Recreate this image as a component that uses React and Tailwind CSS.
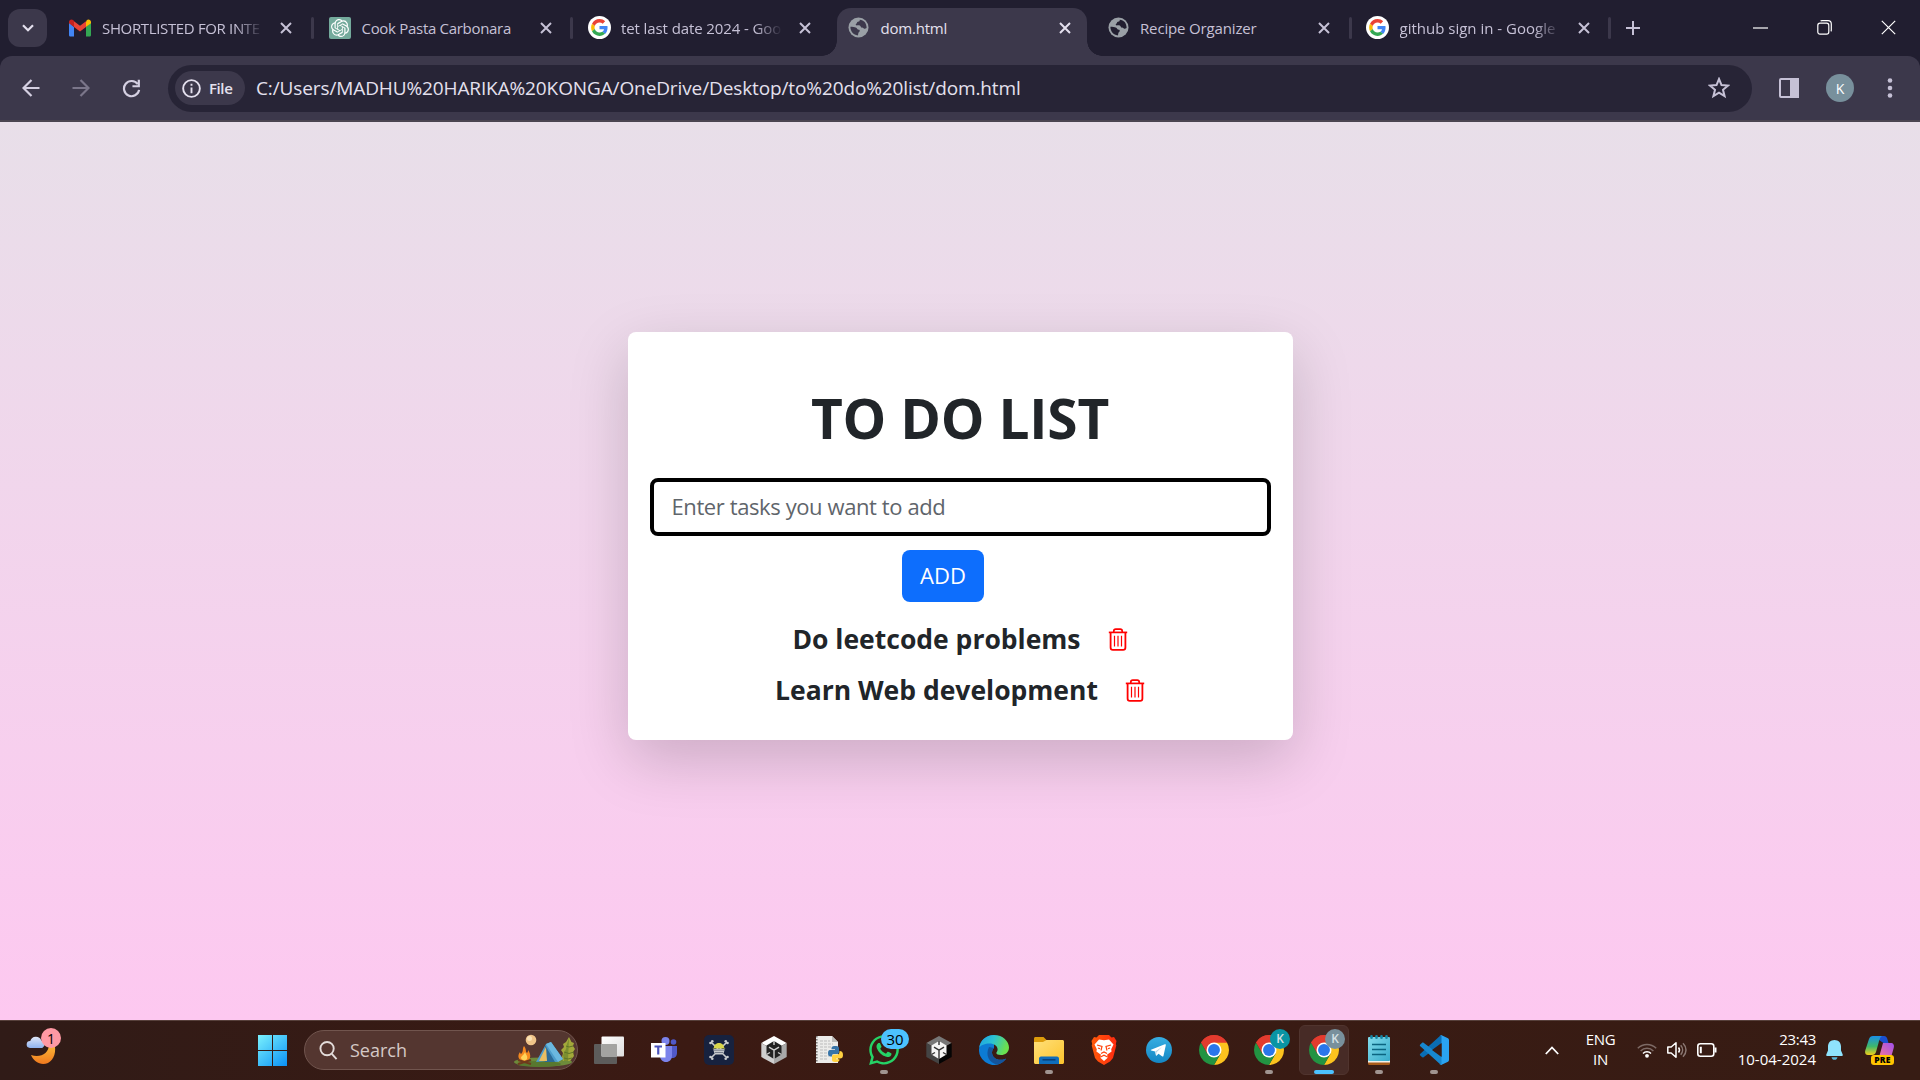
import { FaWhatsapp } from "react-icons/fa";
import { SiOpenai } from "react-icons/si";

/* ---------- favicons ---------- */
function Gmail() {
  return (
    <svg viewBox="0 0 22 17" className="h-[18px] w-[22px]">
      <path d="M0 3v12.4C0 16.3.7 17 1.6 17H5V7.5z" fill="#4285f4" />
      <path d="M22 3v12.4c0 .9-.7 1.6-1.6 1.6H17V7.5z" fill="#34a853" />
      <path d="M17 2.2v5.4l5-3.8V2.6C22 .3 19.4-.6 17.9.6z" fill="#fbbc04" />
      <path d="M5 7.6V1.8l6 4.5 6-4.5v5.8l-6 4.5z" fill="#ea4335" />
      <path d="M0 2.6v1.2l5 3.8V1.6L4.1.6C2.400-.6 0 .3 0 2.600z" fill="#c5221f" />
    </svg>
  );
}

function ChatGPT() {
  return (
    <div className="flex size-[22px] items-center justify-center rounded-[2px] bg-[#74aa9c] text-white">
      <SiOpenai className="size-[18px]" />
    </div>
  );
}

function GoogleG() {
  return (
    <svg viewBox="0 0 48 48" className="size-[23px] shrink-0">
      <circle cx="24" cy="24" r="24" fill="#fff" />
      <g transform="translate(6.500 6.500) scale(.73)">
        <path fill="#ea4335" d="M24 9.500c3.540 0 6.710 1.220 9.210 3.600l6.850-6.850C35.900 2.380 30.470 0 24 0 14.620 0 6.510 5.380 2.560 13.220l7.980 6.190C12.430 13.720 17.740 9.500 24 9.500z" />
        <path fill="#4285f4" d="M46.980 24.550c0-1.570-.15-3.090-.38-4.550H24v9.020h12.940c-.58 2.960-2.260 5.480-4.780 7.180l7.730 6c4.510-4.180 7.090-10.360 7.090-17.650z" />
        <path fill="#fbbc05" d="M10.530 28.590c-.48-1.450-.76-2.990-.76-4.590s.27-3.140.76-4.590l-7.980-6.190C.92 16.460 0 20.120 0 24c0 3.880.92 7.540 2.560 10.780l7.970-6.190z" />
        <path fill="#34a853" d="M24 48c6.480 0 11.930-2.130 15.890-5.810l-7.730-6c-2.150 1.450-4.920 2.300-8.160 2.300-6.260 0-11.570-4.220-13.470-9.910l-7.980 6.190C6.510 42.620 14.620 48 24 48z" />
      </g>
    </svg>
  );
}

function Globe({ cut }) {
  return (
    <svg viewBox="0 0 22 22" className="size-[21px]">
      <circle cx="11" cy="11" r="10.500" fill="#9aa0a6" />
      <path
        d="M2.500 10.200c2.200.2 4.200.1 6.200 1 .9.500.8 1.500 1.800 2 1 .4 1.700 0 1.800 1.300.1 1.200-1.400 1.400-1.500 2.500 0 1-.2 1.700-.6 2.300C5.800 18.700 2.500 15.200 2.500 10.200zM12.300 3c.2 1.300-.5 2-1.900 2.100-1.300.1-.5 1.600-1.800 2.100-1 .5-.5 1.700.6 1.600 1.800-.2 3.700-.2 4.200 1.400.4 1.300 2.200.7 2.900 1.500.8 1 1.700.8 3.200-.2C19.600 6.600 16.500 3.200 12.300 3z"
        fill={cut}
      />
    </svg>
  );
}

function Cross({ className }) {
  return (
    <svg viewBox="0 0 12 12" className={className} fill="none" stroke="currentColor" strokeWidth="2">
      <path d="M1 1l10 10M11 1L1 11" />
    </svg>
  );
}

/* ---------- browser tabs ---------- */
const tabs = [
  { icon: <Gmail />, title: "SHORTLISTED FOR INTE", fade: true, track: "tracking-[-0.35px]", sep: true },
  { icon: <ChatGPT />, title: "Cook Pasta Carbonara", track: "tracking-[-0.3px]", sep: true },
  { icon: <GoogleG />, title: "tet last date 2024 - Goo", fade: true, track: "tracking-[-0.1px]" },
  { icon: <Globe cut="#3c384b" />, title: "dom.html", active: true, track: "tracking-[-0.2px]" },
  { icon: <Globe cut="#211e30" />, title: "Recipe Organizer", track: "tracking-[-0.15px]", sep: true },
  { icon: <GoogleG />, title: "github sign in - Google", fade: true, track: "tracking-[0px]", sep: true },
];

function Tab({ tab }) {
  return (
    <div className="relative h-12 w-[259.500px] shrink-0 pl-[5px] pr-[4px]">
      {tab.active && (
        <>
          <div className="absolute -left-[10px] bottom-0 size-[15px] bg-[radial-gradient(circle_at_0_0,transparent_14.500px,#3c384b_15px)]" />
          <div className="absolute -right-[11px] bottom-0 size-[15px] bg-[radial-gradient(circle_at_100%_0,transparent_14.500px,#3c384b_15px)]" />
        </>
      )}
      <div
        className={
          "flex h-12 items-center rounded-t-[14px] pb-[9px] pl-[11px] " +
          (tab.active ? "bg-[#3c384b] text-[#e4e0ee]" : "text-[#c6c1d6]")
        }
      >
        <div className="flex w-[22px] shrink-0 justify-center">{tab.icon}</div>
        <div
          className={
            "ml-[11px] w-[163px] whitespace-nowrap text-[15px] leading-6 " +
            tab.track +
            (tab.fade ? " [mask-image:linear-gradient(to_right,#000_82%,transparent_99%)]" : "")
          }
        >
          {tab.title}
        </div>
        <Cross className="ml-[15px] size-[12px] shrink-0" />
      </div>
      {tab.sep && <div className="absolute -right-[1px] top-[9px] h-[22px] w-[3px] rounded bg-[#3c384b]" />}
    </div>
  );
}

function TabStrip() {
  return (
    <div className="flex h-14 bg-[#211e30] pt-2">
      <div className="ml-2 mt-px flex h-[38px] w-[39px] items-center justify-center rounded-[12px] bg-[#3c384b] text-[#e4e0ee]">
        <svg viewBox="0 0 12 8" className="h-[8px] w-[12px]" fill="none" stroke="currentColor" strokeWidth="2.200">
          <path d="M1 1.200l5 5 5-5" />
        </svg>
      </div>
      <div className="ml-[6px] flex">
        {tabs.map((t) => (
          <Tab key={t.title} tab={t} />
        ))}
      </div>
      <svg viewBox="0 0 14 14" className="ml-[16px] mt-[13px] size-[14px] text-[#c6c1d6]" stroke="currentColor" strokeWidth="2">
        <path d="M7 0v14M0 7h14" />
      </svg>
      <div className="ml-auto mr-[24px] mt-[12px] flex items-start gap-[49px] text-white">
        <svg viewBox="0 0 15 15" className="size-[15px]" stroke="currentColor" strokeWidth="1.200">
          <path d="M0 8h15" />
        </svg>
        <svg viewBox="0 0 15 15" className="size-[15px]" fill="none" stroke="currentColor" strokeWidth="1.200">
          <rect x=".8" y="3.200" width="11" height="11" rx="2.200" />
          <path d="M3.600 1.200C4 .8 4.500.7 5 .7h6c2 0 3.300 1.300 3.300 3.300v6c0 .6-.1 1-.4 1.400" />
        </svg>
        <svg viewBox="0 0 15 15" className="size-[15px]" stroke="currentColor" strokeWidth="1.200">
          <path d="M.8.8l13.400 13.400M14.200.8L.8 14.200" />
        </svg>
      </div>
    </div>
  );
}

function Toolbar() {
  return (
    <div className="bg-[#211e30]">
      <div className="flex h-[66px] items-center rounded-t-[12px] border-b-2 border-[#4a4550] bg-[#3c384b] text-[#c6c1d6]">
        <svg viewBox="0 0 18 18" className="ml-[22px] size-[18px]" fill="none" stroke="#d5d0e2" strokeWidth="2.200">
          <path d="M17.500 9H2M9.500 1L1.500 9l8 8" />
        </svg>
        <svg viewBox="0 0 18 18" className="ml-[32px] size-[18px]" fill="none" stroke="#7b768a" strokeWidth="2.200">
          <path d="M.5 9H16M8.500 1l8 8-8 8" />
        </svg>
        <svg viewBox="0 0 20 20" className="ml-[32px] size-[19px]" fill="none" stroke="#d5d0e2" strokeWidth="2.300">
          <path d="M16.600 5.400A8 8 0 1 0 18 11.500" />
          <path d="M17.700.8v6.800H11" />
        </svg>
        <div className="ml-[27px] flex h-[47px] w-[1584px] items-center rounded-full bg-[#272436] pl-[7px] pr-[22px]">
          <div className="flex h-[34px] w-[70px] items-center rounded-full bg-[#3c384b] pl-[7px] text-[#e4e0ee]">
            <svg viewBox="0 0 20 20" className="size-[19px]" fill="none" stroke="currentColor" strokeWidth="2">
              <circle cx="10" cy="10" r="8.800" />
              <path d="M10 9v6M10 5v2.200" />
            </svg>
            <span className="ml-[8px] text-[15px] font-semibold tracking-[-0.4px]">File</span>
          </div>
          <span className="ml-[11px] whitespace-nowrap text-[19px] tracking-[-0.115px] text-[#e4e0ee]">
            C:/Users/MADHU%20HARIKA%20KONGA/OneDrive/Desktop/to%20do%20list/dom.html
          </span>
          <svg viewBox="0 0 22 22" className="ml-auto size-[22px]" fill="none" stroke="currentColor" strokeWidth="2">
            <path d="M11 2l2.500 6.100 6.600.5-5.100 4.200 1.600 6.400L11 15.700l-5.600 3.500L7 12.800 1.900 8.600l6.600-.5z" />
          </svg>
        </div>
        <svg viewBox="0 0 20 20" className="ml-[27px] size-[20px]" fill="none" stroke="currentColor" strokeWidth="2">
          <rect x="1" y="1" width="18" height="18" rx="1" />
          <path d="M12 1h7v18h-7z" fill="currentColor" />
        </svg>
        <div className="ml-[27px] flex size-[28px] items-center justify-center rounded-full bg-[#78909c] text-[14px] text-white">K</div>
        <svg viewBox="0 0 6 20" className="ml-[33px] h-[20px] w-[6px]" fill="currentColor">
          <circle cx="3" cy="2.500" r="2.300" />
          <circle cx="3" cy="10" r="2.300" />
          <circle cx="3" cy="17.500" r="2.300" />
        </svg>
      </div>
    </div>
  );
}

/* ---------- page ---------- */
function Trash() {
  return (
    <svg viewBox="0 0 20 23" className="ml-[27px] mt-[2px] h-[23px] w-[20px]" fill="none" stroke="#ff0000">
      <path d="M.8 4.400h18.400" strokeWidth="1.700" />
      <path d="M5.800 4V3.200C5.800 2 6.600 1.200 7.800 1.200h4.400c1.200 0 2 .8 2 2V4" strokeWidth="1.700" />
      <path d="M2.600 4.500v15c0 1.500.8 2.400 2.300 2.400h10.200c1.500 0 2.300-.9 2.300-2.400v-15" strokeWidth="1.800" />
      <path d="M6.500 7.800v10.600M10 7.800v10.600M13.500 7.800v10.600" strokeWidth="1.200" />
    </svg>
  );
}

function Task({ text }) {
  return (
    <div className="flex h-[51px] items-center justify-center">
      <span className="text-[26.500px] font-bold leading-8">{text}</span>
      <Trash />
    </div>
  );
}

function Page() {
  return (
    <div className="flex h-[898px] items-start justify-center bg-gradient-to-b from-[#e8dfe9] to-[#fdc8f0] pt-[210px]">
      <div className="h-[408px] w-[665px] rounded-lg bg-white px-[22px] pt-[51px] text-center text-[#212529] shadow-[0_20px_60px_rgba(0,0,0,0.175)]">
        <h1 className="text-[55px] font-bold leading-[70px] tracking-[-0.200px]">TO DO LIST</h1>
        <input
          type="text"
          placeholder="Enter tasks you want to add"
          className="mt-[25px] block h-[58px] w-full rounded-lg border-4 border-black pb-[2px] pl-[18px] pr-[16px] text-[22px] tracking-[-0.4px] outline-none placeholder:text-[#5f656b] placeholder:opacity-100"
        />
        <button className="mr-[35px] mt-[14px] h-[52px] w-[82px] rounded-lg bg-[#0d6efd] pb-[2px] pl-px text-[22px] leading-7 text-white">ADD</button>
        <div className="mt-[11px]">
          <Task text="Do leetcode problems" />
          <Task text="Learn Web development" />
        </div>
      </div>
    </div>
  );
}

/* ---------- taskbar icons ---------- */
function Weather() {
  return (
    <div className="relative h-[40px] w-[36px]">
      <svg viewBox="0 0 36 40" className="h-[40px] w-[36px]">
        <defs>
          <linearGradient id="moon" x1="0" y1="0" x2="0" y2="1">
            <stop offset="0" stopColor="#fcbf3a" />
            <stop offset="1" stopColor="#f0791f" />
          </linearGradient>
          <linearGradient id="cloud" x1="0" y1="0" x2="0" y2="1">
            <stop offset="0" stopColor="#dfe6f7" />
            <stop offset="1" stopColor="#8fb2ee" />
          </linearGradient>
        </defs>
        <path d="M29 15c3 8 0 17-6 20-7 3-14-1-17-8 9 3 18-1 18-11z" fill="url(#moon)" />
        <path d="M5 20a3.500 3.500 0 0 1 .3-7 5.800 5.800 0 0 1 11-.5 4 4 0 0 1 1 7.500z" fill="url(#cloud)" />
      </svg>
      <div className="absolute left-[16px] top-0 flex size-[20px] items-center justify-center rounded-full bg-[#ff99a4] text-[14px] text-black">1</div>
    </div>
  );
}

function WindowsLogo() {
  return (
    <svg viewBox="0 0 29 32" className="h-[32px] w-[29px]">
      <defs>
        <linearGradient id="win" gradientUnits="userSpaceOnUse" x1="0" y1="0" x2="29" y2="32">
          <stop offset="0" stopColor="#7df3fd" />
          <stop offset="1" stopColor="#0a91f6" />
        </linearGradient>
      </defs>
      <path d="M0 1h14v15H0zM15 1h14v15H15zM0 17h14v15H0zM15 17h14v15H15z" fill="url(#win)" />
    </svg>
  );
}

function Campsite() {
  return (
    <svg viewBox="0 0 62 34" className="h-[34px] w-[62px]">
      <ellipse cx="30" cy="29" rx="29" ry="4.500" fill="#6d8a3a" />
      <ellipse cx="26" cy="31" rx="22" ry="3" fill="#58782f" />
      <circle cx="18" cy="7" r="5.300" fill="#efc489" />
      <circle cx="16.500" cy="5.500" r="2.500" fill="#fae2b6" />
      <path d="M56 4l2.500 5 2.500 1-1 3 2 3-2 3 1 4-4 5h-7l-1-4 1-4-2-3 3-3-1-3 3-2z" fill="#a3a83a" />
      <path d="M56 5l-1 23h-4l-1-6 3-6 1-5z" fill="#7c8f2f" />
      <path d="M53 13l3 1 4-1M51 19l5 1.500 5-1.500M51 25l4 1 4-1" fill="none" stroke="#5f7526" strokeWidth="1" />
      <path d="M23 29l10-18 5-2 12 17-6 3-10-1z" fill="#4c9ccb" />
      <path d="M33 11l5-2 12 17-5 3z" fill="#6bb8df" />
      <path d="M32 12l10 17H32z" fill="#2b6a96" />
      <path d="M33 14l-7 14h8z" fill="#e8bd62" />
      <path d="M11 13c3 4 1 5 3 7 1-1 1-2 1-3 3 4 4 10-3 11-7 0-8-5-5-9 0 1 1 2 1 2 3-3 1-5 3-8z" fill="#f58a1f" />
      <path d="M12 19c1 3 3 4 2 7-1 2-5 2-6-1 0-2 3-3 4-6z" fill="#ffd45a" />
      <path d="M5 27l13 4M18 27L5 31" stroke="#70391c" strokeWidth="2" />
    </svg>
  );
}

function TaskView() {
  return (
    <svg viewBox="0 0 30 30" className="size-[30px]">
      <defs>
        <linearGradient id="tv" x1="0" y1="0" x2="1" y2="1">
          <stop offset="0" stopColor="#fff" />
          <stop offset="1" stopColor="#ddd" />
        </linearGradient>
      </defs>
      <rect x="0" y="9" width="23" height="20" rx="1" fill="#5d5c5b" />
      <rect x="7.500" y="1.500" width="22.500" height="20" rx="1" fill="url(#tv)" />
      <path d="M7.500 9H22c.6 0 1 .4 1 1v11.500H7.500z" fill="#a3a3a1" />
    </svg>
  );
}

function Teams() {
  return (
    <svg viewBox="0 0 28 28" className="size-[28px]">
      <circle cx="23.500" cy="6" r="2.800" fill="#5059c9" />
      <path d="M19 10h8v7c0 3-2 5-4.500 5H19z" fill="#5059c9" />
      <circle cx="15.500" cy="5" r="4" fill="#7b83eb" />
      <path d="M10 10h12v9.500c0 4-2.500 6.500-6 6.500s-6-2.500-6-6.500z" fill="#7b83eb" />
      <rect x="1" y="7" width="14.500" height="14.500" fill="#fff" />
      <path d="M4.500 10.500H12M8.250 10.500v8" stroke="#4b53bc" strokeWidth="2.200" />
    </svg>
  );
}

function Pirate() {
  return (
    <svg viewBox="0 0 30 30" className="size-[30px]">
      <rect width="30" height="30" rx="5" fill="#17223f" />
      <path d="M7 7l16 16M23 7L7 23" stroke="#c9cbcd" strokeWidth="1.600" />
      <g fill="#c9cbcd">
        <circle cx="6.500" cy="8" r="1.300" /><circle cx="8.300" cy="6.200" r="1.300" />
        <circle cx="23.500" cy="8" r="1.300" /><circle cx="21.700" cy="6.200" r="1.300" />
        <circle cx="6.500" cy="22" r="1.300" /><circle cx="8.300" cy="23.800" r="1.300" />
        <circle cx="23.500" cy="22" r="1.300" /><circle cx="21.700" cy="23.800" r="1.300" />
        <path d="M9.500 14h11c0 3-1 4.500-2.500 5.500H12c-1.500-1-2.500-2.500-2.500-5.500z" />
      </g>
      <path d="M10 12.500c0-6 10-6 10 0l1.500 1h-13z" fill="#d9d64b" />
      <path d="M10 15.200h10M11 17.500h8" stroke="#6d7482" strokeWidth=".9" />
    </svg>
  );
}

function Unity({ dark }) {
  return (
    <svg viewBox="0 0 26 28" className="h-[28px] w-[26px]">
      <path d="M13 0l12.700 7L13 14 .3 7z" fill={dark ? "#777" : "#fff"} />
      <path d="M.3 7L13 14v14L.3 21z" fill={dark ? "#444" : "#cfcfcf"} />
      <path d="M25.700 7L13 14v14l12.700-7z" fill={dark ? "#050505" : "#a9a9a9"} />
      <path d="M13 5l7.500 4.500v9L13 23l-7.500-4.500v-9z" fill={dark ? "#f4f4f4" : "#222"} />
      <path
        d="M13 14.200V23M13 14.200L8 11.200M13 14.200l5-3M13 5v4M5.500 18.500l3.500-2M20.500 18.500l-3.500-2"
        stroke={dark ? "#333" : "#cfcfcf"}
        strokeWidth="1.400"
      />
    </svg>
  );
}

function PythonFile() {
  return (
    <svg viewBox="0 0 30 30" className="size-[30px]">
      <path d="M2 1h16l6 6v21H2z" fill="#ececea" />
      <path d="M18 1l6 6h-6z" fill="#bdbdbb" />
      <path d="M2.800 1v27" stroke="#777" strokeWidth="1.500" strokeDasharray="1.500 1.500" />
      <path d="M6 6h10M6 9h13M6 12h11M6 15h8M6 18h8M6 21h9M6 24h8" stroke="#bbb" strokeDasharray="3 1" />
      <path d="M21 11c4 0 4 1 4 3v3c0 1.500-1 2-2.500 2H20c-2 0-2 1-2 2.500h-1.500c-2 0-2.500-1.500-2.500-3.500 0-2.500 1-3 3-3h4v-.8h-3.500C17.500 12 18 11 21 11z" fill="#3774a8" />
      <path d="M22 27c-4 0-4-1-4-3v-2.500c0-1.500 1-2 2.500-2H23c2 0 2.500-1 2.500-3.500 2.500 0 3.500 1.500 3.500 4s-1 3.500-3 3.500h-4v.8h3.500C25.500 26 25 27 22 27z" fill="#ffd141" />
    </svg>
  );
}

function WhatsApp() {
  return <FaWhatsapp className="size-[34px] shrink-0 text-[#25d366]" />;
}

function Edge() {
  return (
    <svg viewBox="0 0 30 30" className="size-[30px]">
      <defs>
        <linearGradient id="eg" x1="0" y1="0" x2="1" y2=".3">
          <stop offset="0" stopColor="#1d9fe4" />
          <stop offset=".5" stopColor="#2cc3d2" />
          <stop offset="1" stopColor="#6be04f" />
        </linearGradient>
      </defs>
      <path d="M15 0a15 15 0 1 0 11.500 24.600c.4-.5 0-1-.6-.7-6 2.600-12.900-.4-12.900-6.400 0-3 2-4.500 2-4.500z" fill="#0c7bd4" />
      <path d="M10 12c-4 8 0 16 8.500 17.500 3-.6 6-2.300 8-4.900.4-.5 0-1-.6-.7-6 2.600-12.900-.4-12.900-6.400 0-3 2-4.500 2-4.500z" fill="#14549c" />
      <path d="M.2 13C1 5.500 7 0 15 0c9 0 15 6.500 15 12.500 0 5-4 7.500-8 7.500-3 0-4.700-1-4.700-2 0-.8 1.300-1.300 1.300-3.500 0-3.500-3.500-6-8-6C6 8.500 1.500 10 .2 13z" fill="url(#eg)" />
    </svg>
  );
}

function Folder() {
  return (
    <svg viewBox="0 0 30 30" className="size-[30px]">
      <defs>
        <linearGradient id="fo" x1="0" y1="0" x2="1" y2="1">
          <stop offset="0" stopColor="#ffe07a" />
          <stop offset="1" stopColor="#fcc32c" />
        </linearGradient>
      </defs>
      <path d="M0 3.500C0 2.700.6 2 1.500 2h8l3.500 3.500V9H0z" fill="#dd9c0b" />
      <path d="M0 7h9l3.500-2H28.500c.8 0 1.500.7 1.500 1.500V27.500c0 .8-.7 1.500-1.500 1.500h-27C.7 29 0 28.300 0 27.500z" fill="url(#fo)" />
      <path d="M5 29v-5.500c0-1 .8-2 2-2h16c1.200 0 2 1 2 2V29z" fill="#0f6dbb" />
      <path d="M8.500 24.800h13" stroke="#093f78" strokeWidth="1.500" />
    </svg>
  );
}

function Brave() {
  return (
    <svg viewBox="0 0 26 30" className="h-[30px] w-[26px]">
      <defs>
        <linearGradient id="br" x1="0" y1="0" x2="1" y2="0">
          <stop offset="0" stopColor="#ff5a0a" />
          <stop offset="1" stopColor="#ff2a10" />
        </linearGradient>
      </defs>
      <path d="M8 0h10l2.500 2.500L23 2l2.500 4-.7 3 .5 1.500L22 23l-3 3.500L13 30l-6-3.500L4 23 .7 10.500 1.200 9 .5 6 3 2l2.500.5z" fill="url(#br)" />
      <path d="M8 4.500l5 .7 5-.7 4.500 5-2.300 4.800.4 2.200-4.600 3.200 1 2.800-4 3.500-4-3.500 1-2.800-4.600-3.200.4-2.200L3.500 9.500z" fill="#fff" />
      <path d="M6 10l5 1.500-1 4M20 10l-5 1.500 1 4M10 18.500l3-1.500 3 1.500M9 22.200l4-2 4 2M7 13l2 .8M19 13l-2 .8" fill="none" stroke="#ff440c" strokeWidth="1.200" />
    </svg>
  );
}

function Telegram() {
  return (
    <svg viewBox="0 0 26 26" className="size-[26px]">
      <defs>
        <linearGradient id="tg" x1="0" y1="0" x2="0" y2="1">
          <stop offset="0" stopColor="#37aee2" />
          <stop offset="1" stopColor="#1486c4" />
        </linearGradient>
      </defs>
      <circle cx="13" cy="13" r="13" fill="url(#tg)" />
      <path d="M5 12.800l13.800-5.500c.8-.2 1.200.2 1 1l-2.300 10.400c-.2.900-.8 1-1.500.6l-3.500-2.600-1.800 1.700c-.5.400-.8.300-.9-.3l-.7-3.600-3.900-1.100c-.6-.2-.6-.4-.2-.6z" fill="#fff" />
      <path d="M9.300 14.500l6.600-4.400-5.300 5.200-.4 2.700z" fill="#b8d4e6" />
    </svg>
  );
}

function Chrome() {
  return (
    <svg viewBox="0 0 48 48" className="size-[30px]">
      <path d="M24 24L3.220 12A24 24 0 0 1 44.780 12z" fill="#e33b2e" />
      <path d="M24 12h20.780A24 24 0 0 1 24 48l10.390-18z" fill="#fcc31e" />
      <path d="M13.600 30L3.220 12A24 24 0 0 0 24 48l10.390-18z" fill="#229342" />
      <path d="M3.220 12A24 24 0 0 1 44.780 12H24L13.610 30z" fill="#e33b2e" />
      <circle cx="24" cy="24" r="12" fill="#fff" />
      <circle cx="24" cy="24" r="9.500" fill="#2a76ea" />
    </svg>
  );
}

function Notepad() {
  return (
    <svg viewBox="0 0 22 30" className="h-[30px] w-[22px]">
      <defs>
        <linearGradient id="np" x1="0" y1="0" x2="1" y2="1">
          <stop offset="0" stopColor="#83dcec" />
          <stop offset="1" stopColor="#37abcb" />
        </linearGradient>
      </defs>
      <path d="M0 25h22v3.800c0 .7-.5 1.200-1.200 1.200H1.200C.5 30 0 29.500 0 28.800z" fill="#a85b1a" />
      <path d="M0 24h22v3.500H0z" fill="#f4efe8" />
      <rect y="2" width="22" height="24" rx="1" fill="url(#np)" />
      <path d="M4 9.500h14M4 14.500h14M4 19.500h14" stroke="#0b6480" strokeWidth="1.700" />
      <path d="M3.500 1.300v1.500M8.500 1.300v1.500M13.500 1.300v1.500M18.500 1.300v1.500" stroke="#1686a4" strokeWidth="2.600" strokeLinecap="round" />
    </svg>
  );
}

function VSCode() {
  return (
    <svg viewBox="0 0 30 30" className="size-[30px]">
      <path d="M22 0L1.300 18.800c-.6.500-.6 1.300 0 1.800l1.600 1.500c.5.400 1.100.5 1.700.1L28 4.500z" fill="#0a6db4" />
      <path d="M22 30L1.300 11.200c-.6-.5-.6-1.300 0-1.800l1.600-1.500c.5-.4 1.100-.5 1.700-.1L28 25.500z" fill="#1787cf" />
      <path d="M22 0l7 3.300c.6.300 1 .9 1 1.600v20.200c0 .7-.4 1.300-1 1.600L22 30c-.7.200-1.300 0-1.300-.6 1 .7 1.800.2 1.800-.8V1.400c0-1-1-1.500-1.800-.8C21-.1 21.500-.2 22 0z" fill="#2aa3f2" />
      <path d="M22.500 8v14L13 15z" fill="#3a1b14" />
    </svg>
  );
}

function ProfileBadge({ teal }) {
  return (
    <div
      className={
        "absolute -right-[6px] -top-[6px] flex size-[20px] items-center justify-center rounded-full text-[12px] font-semibold text-[#d6e0e4] " +
        (teal ? "bg-[#0a94a4]" : "bg-[#78909c]")
      }
    >
      K
    </div>
  );
}

const apps = [
  { id: "view", el: <TaskView /> },
  { id: "teams", el: <Teams /> },
  { id: "pirate", el: <Pirate /> },
  { id: "unityhub", el: <Unity /> },
  { id: "python", el: <PythonFile /> },
  {
    id: "whatsapp",
    el: <WhatsApp />,
    run: true,
    badge: <div className="absolute -right-[10px] -top-[6px] flex h-[20px] w-[28px] items-center justify-center rounded-full bg-[#4cc2ff] text-[15px] text-black">30</div>,
  },
  { id: "unity", el: <Unity dark /> },
  { id: "edge", el: <Edge /> },
  { id: "folder", el: <Folder />, run: true },
  { id: "brave", el: <Brave /> },
  { id: "telegram", el: <Telegram /> },
  { id: "chrome", el: <Chrome /> },
  { id: "chrome-teal", el: <Chrome />, run: true, badge: <ProfileBadge teal /> },
  { id: "chrome-active", el: <Chrome />, active: true, badge: <ProfileBadge /> },
  { id: "notepad", el: <Notepad />, run: true },
  { id: "code", el: <VSCode />, run: true },
];

function AppButton({ app }) {
  return (
    <div className="flex h-[60px] w-[55px] shrink-0 justify-center pt-[5px]">
      <div
        className={
          "relative flex h-[50px] w-[50px] items-center justify-center rounded-md border " +
          (app.active ? "border-[#50342e] bg-[#472b26]" : "border-transparent")
        }
      >
        <div className="relative flex size-[30px] items-center justify-center">
          {app.el}
          {app.badge}
        </div>
        {app.run && <div className="absolute bottom-0 h-[4px] w-[8px] rounded-full bg-[#a09490]" />}
        {app.active && <div className="absolute bottom-0 h-[4px] w-[20px] rounded-full bg-[#4cc2ff]" />}
      </div>
    </div>
  );
}

function Copilot() {
  return (
    <div className="relative h-[30px] w-[30px]">
      <svg viewBox="0 0 30 26" className="h-[26px] w-[30px]">
        <defs>
          <linearGradient id="cpa" x1="0" y1="0" x2="0" y2="1">
            <stop offset="0" stopColor="#1a8fe8" />
            <stop offset=".55" stopColor="#3fb86a" />
            <stop offset="1" stopColor="#f2cf1a" />
          </linearGradient>
          <linearGradient id="cpb" x1="1" y1="0" x2="0" y2="1">
            <stop offset="0" stopColor="#a04fee" />
            <stop offset="1" stopColor="#ff7d8a" />
          </linearGradient>
        </defs>
        <path d="M8 1h11c2 0 3 1.500 3.500 3.500L23.500 8h-5z" fill="#1a4fd0" />
        <path d="M8 1h9c-2 1-2.500 3-3.500 7L11 17c-.6 2-2 3-4 3H3c-2.500 0-3.500-2-2.600-5L4 4c.7-2 2-3 4-3z" fill="url(#cpa)" />
        <path d="M18 8h7.500c3 0 4 2 3.200 5l-2 7c-.7 2-2 4-4.500 4H11c2 0 3-1.500 3.500-3.500z" fill="url(#cpb)" />
      </svg>
      <div className="absolute bottom-0 left-[6px] flex h-[10px] w-[23px] items-center justify-center rounded-[3px] bg-[#ffc400] text-[8.500px] font-extrabold tracking-[0.3px] text-black">PRE</div>
    </div>
  );
}

function Taskbar() {
  return (
    <div className="flex h-[60px] items-center border-t border-[#57403b] bg-gradient-to-r from-[#301b17] via-[#3b1a13] via-35% to-[#371c14] pb-px">
      <div className="ml-[25px] -mt-[4px]">
        <Weather />
      </div>
      <div className="ml-[197px]">
        <WindowsLogo />
      </div>
      <div className="ml-[17px] flex h-[40px] w-[274px] items-center rounded-full border border-[#71554e] bg-[#543630] pl-[14px]">
        <svg viewBox="0 0 20 20" className="size-[19px]" fill="none" stroke="#e3dcda" strokeWidth="2">
          <circle cx="8.500" cy="8" r="7" />
          <path d="M13.500 13.500l5 5.500" />
        </svg>
        <span className="ml-[12px] text-[18px] leading-6 text-[#d5c9c6]">Search</span>
        <div className="ml-auto mr-[2px]">
          <Campsite />
        </div>
      </div>
      <div className="ml-[3.500px] flex">
        {apps.map((a) => (
          <AppButton key={a.id} app={a} />
        ))}
      </div>
      <div className="ml-auto flex items-center pr-[25px] text-white">
        <svg viewBox="0 0 14 9" className="h-[9px] w-[14px]" fill="none" stroke="currentColor" strokeWidth="1.800">
          <path d="M.8 8L7 1.500 13.200 8" />
        </svg>
        <div className="-mt-[2px] ml-[26px] w-[31px] whitespace-nowrap text-center text-[15px] leading-[20px]">
          <div className="-mx-2 tracking-[-0.4px]">ENG</div>
          <div className="tracking-[-0.3px]">IN</div>
        </div>
        <svg viewBox="0 0 20 16" className="ml-[21px] h-[16px] w-[20px]" fill="none" strokeWidth="1.500">
          <path d="M.8 6.200a13 13 0 0 1 18.400 0M3.600 9a9 9 0 0 1 12.800 0" stroke="#7d6a65" />
          <path d="M6 11.500a5.600 5.600 0 0 1 8 0" stroke="#fff" />
          <circle cx="10" cy="13.800" r="1.900" fill="#fff" />
        </svg>
        <svg viewBox="0 0 20 18" className="ml-[10px] h-[18px] w-[20px]" fill="none" stroke="#fff" strokeWidth="1.500">
          <path d="M.8 6h3.400L9 1.800v14.400L4.200 12H.8z" strokeLinejoin="round" />
          <path d="M11.500 6.500c1.300 1.600 1.300 3.400 0 5" />
          <path d="M13.700 4.300c2.500 2.800 2.500 6.600 0 9.400M16 2.200c4 4 4 9.600 0 13.600" stroke="#8a7772" />
        </svg>
        <svg viewBox="0 0 20 14" className="ml-[10px] h-[14px] w-[20px]" fill="none" stroke="#fff" strokeWidth="1.600">
          <rect x=".8" y=".8" width="16" height="12.400" rx="2.500" />
          <path d="M18.500 4.500v5M3.800 3.800v6.400" strokeWidth="2" />
        </svg>
        <div className="-mt-[2px] ml-[20px] w-[79px] whitespace-nowrap text-right text-[15px] leading-[20px]">
          <div className="tracking-[-0.3px]">23:43</div>
          <div>10-04-2024</div>
        </div>
        <svg viewBox="0 0 17 20" className="ml-[10px] h-[20px] w-[17px]" fill="#8fe3fd">
          <path d="M8.500 0C4.600 0 2 2.800 2 6.500v4L.3 14.400c-.3.800.1 1.600 1 1.600h14.400c.9 0 1.300-.8 1-1.600L15 10.500v-4C15 2.800 12.400 0 8.500 0z" />
          <path d="M5.500 17.200h6c-.3 1.600-1.500 2.600-3 2.600s-2.700-1-3-2.600z" fill="#59b7dc" />
        </svg>
        <div className="ml-[22px]">
          <Copilot />
        </div>
      </div>
    </div>
  );
}

export default function App() {
  return (
    <div className="h-[1080px] w-[1920px] overflow-hidden font-['Open_Sans','Noto_Sans',sans-serif]">
      <TabStrip />
      <Toolbar />
      <Page />
      <Taskbar />
    </div>
  );
}
